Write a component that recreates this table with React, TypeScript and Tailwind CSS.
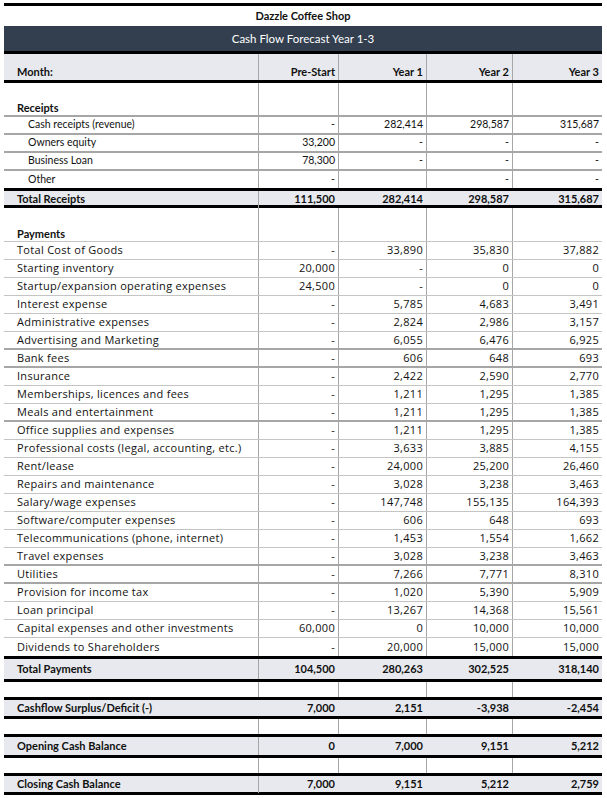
import React from "react";

// column grid: label | pre-start | year 1 | year 2 | year 3
const COLS = "grid grid-cols-[254px_80px_88px_86px_90px]";
const CAL = "font-['Lato',sans-serif]";
const TAH = "font-['Open_Sans',sans-serif] tracking-[0.3px]";
const VLINE = "border-l border-[#a6a6a6]";

const receipts = [
  ["Cash receipts (revenue)", "-", "282,414", "298,587", "315,687"],
  ["Owners equity", "33,200", "-", "-", "-"],
  ["Business Loan", "78,300", "-", "-", "-"],
  ["Other", "-", "", "-", "-"],
];

// thick = heavier grey rule under the row
const payments: [string, string, string, string, string, boolean?][] = [
  ["Total Cost of Goods", "-", "33,890", "35,830", "37,882"],
  ["Starting inventory", "20,000", "-", "0", "0"],
  ["Startup/expansion operating expenses", "24,500", "-", "0", "0"],
  ["Interest expense", "-", "5,785", "4,683", "3,491"],
  ["Administrative expenses", "-", "2,824", "2,986", "3,157"],
  ["Advertising and Marketing", "-", "6,055", "6,476", "6,925", true],
  ["Bank fees", "-", "606", "648", "693", true],
  ["Insurance", "-", "2,422", "2,590", "2,770"],
  ["Memberships, licences and fees", "-", "1,211", "1,295", "1,385"],
  ["Meals and entertainment", "-", "1,211", "1,295", "1,385", true],
  ["Office supplies and expenses", "-", "1,211", "1,295", "1,385"],
  ["Professional costs (legal, accounting, etc.)", "-", "3,633", "3,885", "4,155"],
  ["Rent/lease", "-", "24,000", "25,200", "26,460"],
  ["Repairs and maintenance", "-", "3,028", "3,238", "3,463"],
  ["Salary/wage expenses", "-", "147,748", "155,135", "164,393"],
  ["Software/computer expenses", "-", "606", "648", "693"],
  ["Telecommunications (phone, internet)", "-", "1,453", "1,554", "1,662"],
  ["Travel expenses", "-", "3,028", "3,238", "3,463", true],
  ["Utilities", "-", "7,266", "7,771", "8,310", true],
  ["Provision for income tax", "-", "1,020", "5,390", "5,909"],
  ["Loan principal", "-", "13,267", "14,368", "15,561"],
  ["Capital expenses and other investments", "60,000", "0", "10,000", "10,000"],
  ["Dividends to Shareholders", "-", "20,000", "15,000", "15,000"],
];

const Num = ({ v, cls = "" }: { v: string; cls?: string }) => (
  <div className={`flex items-center justify-end pr-[3px] ${cls}`}>{v}</div>
);

const Blank = ({ h }: { h: string }) => (
  <div className={`${COLS} ${h}`}>
    <div />
    <div className={VLINE} />
    <div className={VLINE} />
    <div className={VLINE} />
    <div className={VLINE} />
  </div>
);

const TotalRow = ({
  label,
  vals,
  h,
  lines = true,
}: {
  label: string;
  vals: string[];
  h: string;
  lines?: boolean;
}) => (
  <div
    className={`${COLS} ${h} border-y-[3px] border-black bg-[#e7e9ee] ${CAL} text-[11px] font-bold text-[#111]`}
  >
    <div className="flex items-center pl-[13px]">{label}</div>
    {vals.map((v, i) => (
      <Num key={i} v={v} cls={lines && i === 0 ? VLINE : ""} />
    ))}
  </div>
);

export default function App() {
  return (
    <div className="min-h-screen bg-white pt-[3px]">
      <div className="ml-[4px] w-[598px] text-[#111]">
        {/* title */}
        <div
          className={`h-[23px] border-t-[3px] border-black flex items-center justify-center ${CAL} text-[11px] font-bold`}
        >
          Dazzle Coffee Shop
        </div>
        <div
          className={`h-[28px] border-b-[3px] border-black bg-[#333f4f] flex items-center justify-center ${CAL} text-[11.5px] text-white`}
        >
          Cash Flow Forecast Year 1-3
        </div>

        {/* column headers */}
        <div
          className={`${COLS} h-[29px] border-b-[3px] border-black bg-[#e7e9ee] ${CAL} text-[11px] leading-[12px] font-bold`}
        >
          <div className="flex items-end pl-[13px] pb-[2px]">Month:</div>
          {["Pre-Start", "Year 1", "Year 2", "Year 3"].map((t) => (
            <div
              key={t}
              className={`flex items-end justify-end pr-[3px] pb-[2px] ${VLINE}`}
            >
              {t}
            </div>
          ))}
        </div>

        {/* receipts */}
        <div
          className={`${COLS} h-[34px] border-b-2 border-[#a6a6a6] ${CAL} text-[11px] leading-[12px] font-bold`}
        >
          <div className="flex items-end pl-[13px] pb-[1px]">Receipts</div>
          <div className={VLINE} />
          <div className={VLINE} />
          <div className={VLINE} />
          <div className={VLINE} />
        </div>
        {receipts.map((r, idx) => (
          <div
            key={r[0]}
            className={`${COLS} ${
              idx === receipts.length - 1 ? "h-[17px]" : "h-[18px] border-b-2 border-[#a6a6a6]"
            } ${CAL} text-[10.5px]`}
          >
            <div className="flex items-center pl-[24px]">{r[0]}</div>
            {r.slice(1).map((v, i) => (
              <Num key={i} v={v} cls={VLINE} />
            ))}
          </div>
        ))}
        <TotalRow
          label="Total Receipts"
          vals={["111,500", "282,414", "298,587", "315,687"]}
          h="h-[20px]"
        />

        {/* payments */}
        <div
          className={`${COLS} h-[34px] border-b border-[#c4c4c4] ${CAL} text-[11px] leading-[12px] font-bold`}
        >
          <div className="flex items-end pl-[13px] pb-[1px]">Payments</div>
          <div className={VLINE} />
          <div className={VLINE} />
          <div className={VLINE} />
          <div className={VLINE} />
        </div>
        {payments.map((r, idx) => {
          const last = idx === payments.length - 1;
          const rule = last
            ? ""
            : r[5]
            ? "border-b-2 border-[#a6a6a6]"
            : "border-b border-[#c4c4c4]";
          return (
            <div key={r[0]} className={`${COLS} h-[18px] ${rule} ${TAH} text-[11px]`}>
              <div className="flex items-center pl-[13px] whitespace-nowrap">{r[0]}</div>
              {r.slice(1, 5).map((v, i) => (
                <Num key={i} v={v as string} cls={VLINE} />
              ))}
            </div>
          );
        })}
        <TotalRow
          label="Total Payments"
          vals={["104,500", "280,263", "302,525", "318,140"]}
          h="h-[26px]"
        />
        <Blank h="h-[15px]" />
        <TotalRow
          label="Cashflow Surplus/Deficit (-)"
          vals={["7,000", "2,151", "-3,938", "-2,454"]}
          h="h-[22px]"
          lines={false}
        />
        <Blank h="h-[15px]" />
        <TotalRow
          label="Opening Cash Balance"
          vals={["0", "7,000", "9,151", "5,212"]}
          h="h-[24px]"
        />
        <Blank h="h-[15px]" />
        <TotalRow
          label="Closing Cash Balance"
          vals={["7,000", "9,151", "5,212", "2,759"]}
          h="h-[22px]"
        />
      </div>
    </div>
  );
}
